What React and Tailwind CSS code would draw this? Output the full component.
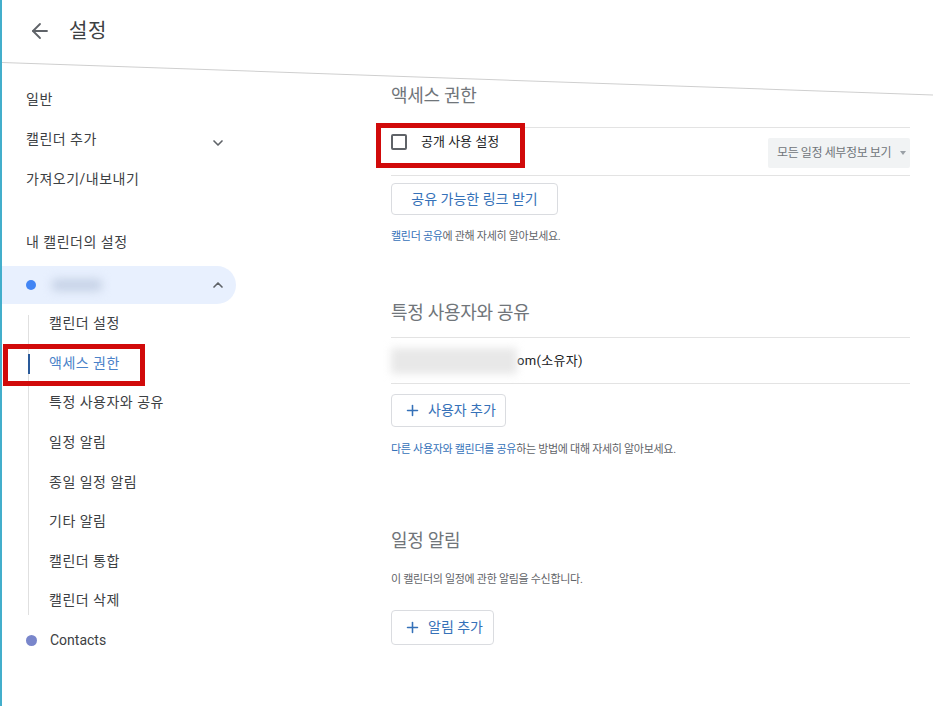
import { ArrowLeft, ChevronDown, ChevronUp, Plus } from "lucide-react";

const subItems = [
  "캘린더 설정",
  "액세스 권한",
  "특정 사용자와 공유",
  "일정 알림",
  "종일 일정 알림",
  "기타 알림",
  "캘린더 통합",
  "캘린더 삭제",
];

function RedBox({ className }) {
  return (
    <div
      className={`absolute border-[5px] border-[#d10a0a] pointer-events-none ${className}`}
    />
  );
}

function OutlineButton({ children, className }) {
  return (
    <button
      className={`flex items-center border border-[#dadce0] rounded-[4px] text-[14px] text-[#3571b8] bg-white ${className}`}
    >
      {children}
    </button>
  );
}

export default function App() {
  return (
    <div className="w-[933px] h-[706px] overflow-hidden bg-white border-l-2 border-[#43aecb] font-['Roboto','Noto_Sans_CJK_KR',sans-serif] relative">
      {/* Header */}
      <div className="h-[62px] flex items-center pl-[26px]">
        <ArrowLeft size={24} strokeWidth={1.8} className="text-[#5f6368]" />
        <span className="ml-[17px] text-[20px] text-[#3c4043] tracking-wide">설정</span>
      </div>
      <div className="h-px w-[940px] bg-[#cfcfcf] origin-left rotate-[2deg]" />

      <div className="flex">
        {/* Sidebar */}
        <div className="w-[234px] shrink-0 pt-[16px] text-[14px] text-[#3c4043] tracking-[0.5px]">
          <div className="h-[40px] flex items-center pl-[24px]">일반</div>
          <div className="h-[40px] flex items-center pl-[24px] pr-[10px] justify-between">
            <span>캘린더 추가</span>
            <ChevronDown size={16} strokeWidth={2.5} className="text-[#5f6368] mt-[8px]" />
          </div>
          <div className="h-[40px] flex items-center pl-[24px]">가져오기/내보내기</div>
          <div className="h-[40px] mt-[23px] flex items-center pl-[24px]">내 캘린더의 설정</div>

          <div className="h-[38px] mt-[4px] flex items-center pl-[24px] pr-[10px] bg-[#e8f0fe] rounded-r-full">
            <span className="w-[10px] h-[10px] rounded-full bg-[#4285f4]" />
            <span className="ml-[16px] w-[50px] h-[12px] rounded bg-[#c6d2e6] blur-[5px]" />
            <ChevronUp size={16} strokeWidth={2.5} className="text-[#5f6368] ml-auto" />
          </div>

          <div className="relative ml-[26px]">
            <div className="absolute left-0 top-[11px] bottom-[6px] w-px bg-[#e0e0e0]" />
            {subItems.map((item) => {
              const active = item === "액세스 권한";
              return (
                <div
                  key={item}
                  className={`relative h-[39.6px] flex items-center pl-[21px] ${
                    active ? "text-[#4a82c9]" : ""
                  }`}
                >
                  {active && (
                    <>
                      <div className="absolute left-0 top-[10px] w-[2px] h-[20px] bg-[#2a5a9a]" />
                      <RedBox className="-left-[25px] top-0 w-[142px] h-[42px]" />
                    </>
                  )}
                  {item}
                </div>
              );
            })}
          </div>

          <div className="h-[40px] flex items-center pl-[24px]">
            <span className="w-[11px] h-[11px] rounded-full bg-[#7986cb]" />
            <span className="ml-[13px] tracking-normal">Contacts</span>
          </div>
        </div>

        {/* Content */}
        <div className="ml-[155px] w-[519px]">
          <div className="pt-[20px] text-[18px] leading-[26px] text-[#70757a] tracking-[-0.3px]">액세스 권한</div>

          <div className="mt-[18px] h-[49px] border-y border-[#e3e3e3] flex items-start relative">
            <RedBox className="-left-[15px] -top-[5px] w-[149px] h-[45px]" />
            <div className="mt-[6px] w-[16px] h-[16px] border-2 border-[#5f6368] rounded-[2px]" />
            <span className="ml-[14px] mt-[5px] text-[13px] leading-[18px] text-[#202124]">공개 사용 설정</span>
            <div className="ml-auto mt-[10px] h-[30px] w-[142px] bg-[#f1f3f4] rounded-[2px] flex items-center pl-[9px] text-[12px] tracking-[-0.4px] text-[#70757a] whitespace-nowrap">
              모든 일정 세부정보 보기
              <span className="ml-[9px] w-0 h-0 border-l-[3px] border-r-[3px] border-t-[4px] border-l-transparent border-r-transparent border-t-[#9aa0a6]" />
            </div>
          </div>

          <OutlineButton className="mt-[7px] h-[32px] w-[167px] justify-center">
            공유 가능한 링크 받기
          </OutlineButton>

          <p className="mt-[14px] text-[11px] leading-[16px] text-[#5f6368] tracking-[-0.3px]">
            <span className="text-[#3571b8]">캘린더 공유</span>에 관해 자세히 알아보세요.
          </p>

          <div className="mt-[55px] text-[18px] leading-[26px] text-[#70757a] tracking-[-0.3px]">특정 사용자와 공유</div>

          <div className="mt-[11px] h-[47px] border-y border-[#e3e3e3] flex items-center">
            <span className="w-[126px] h-[26px] bg-[#e8e8e8] blur-[4px]" />
            <span className="text-[13px] text-[#202124] tracking-[0.3px]">om(소유자)</span>
          </div>

          <OutlineButton className="mt-[10px] h-[33px] w-[115px] pl-[12px]">
            <Plus size={17} strokeWidth={2.2} />
            <span className="ml-[7px]">사용자 추가</span>
          </OutlineButton>

          <p className="mt-[15px] text-[11px] leading-[16px] text-[#5f6368] tracking-[-0.3px]">
            <span className="text-[#3571b8]">다른 사용자와 캘린더를 공유</span>하는 방법에 대해 자세히 알아보세요.
          </p>

          <div className="mt-[70px] text-[18px] leading-[26px] text-[#70757a] tracking-[-0.3px]">일정 알림</div>

          <p className="mt-[18px] text-[11px] leading-[16px] text-[#5f6368] tracking-[-0.3px]">
            이 캘린더의 일정에 관한 알림을 수신합니다.
          </p>

          <OutlineButton className="mt-[22px] h-[35px] w-[103px] pl-[12px]">
            <Plus size={17} strokeWidth={2.2} />
            <span className="ml-[7px]">알림 추가</span>
          </OutlineButton>
        </div>
      </div>
    </div>
  );
}
